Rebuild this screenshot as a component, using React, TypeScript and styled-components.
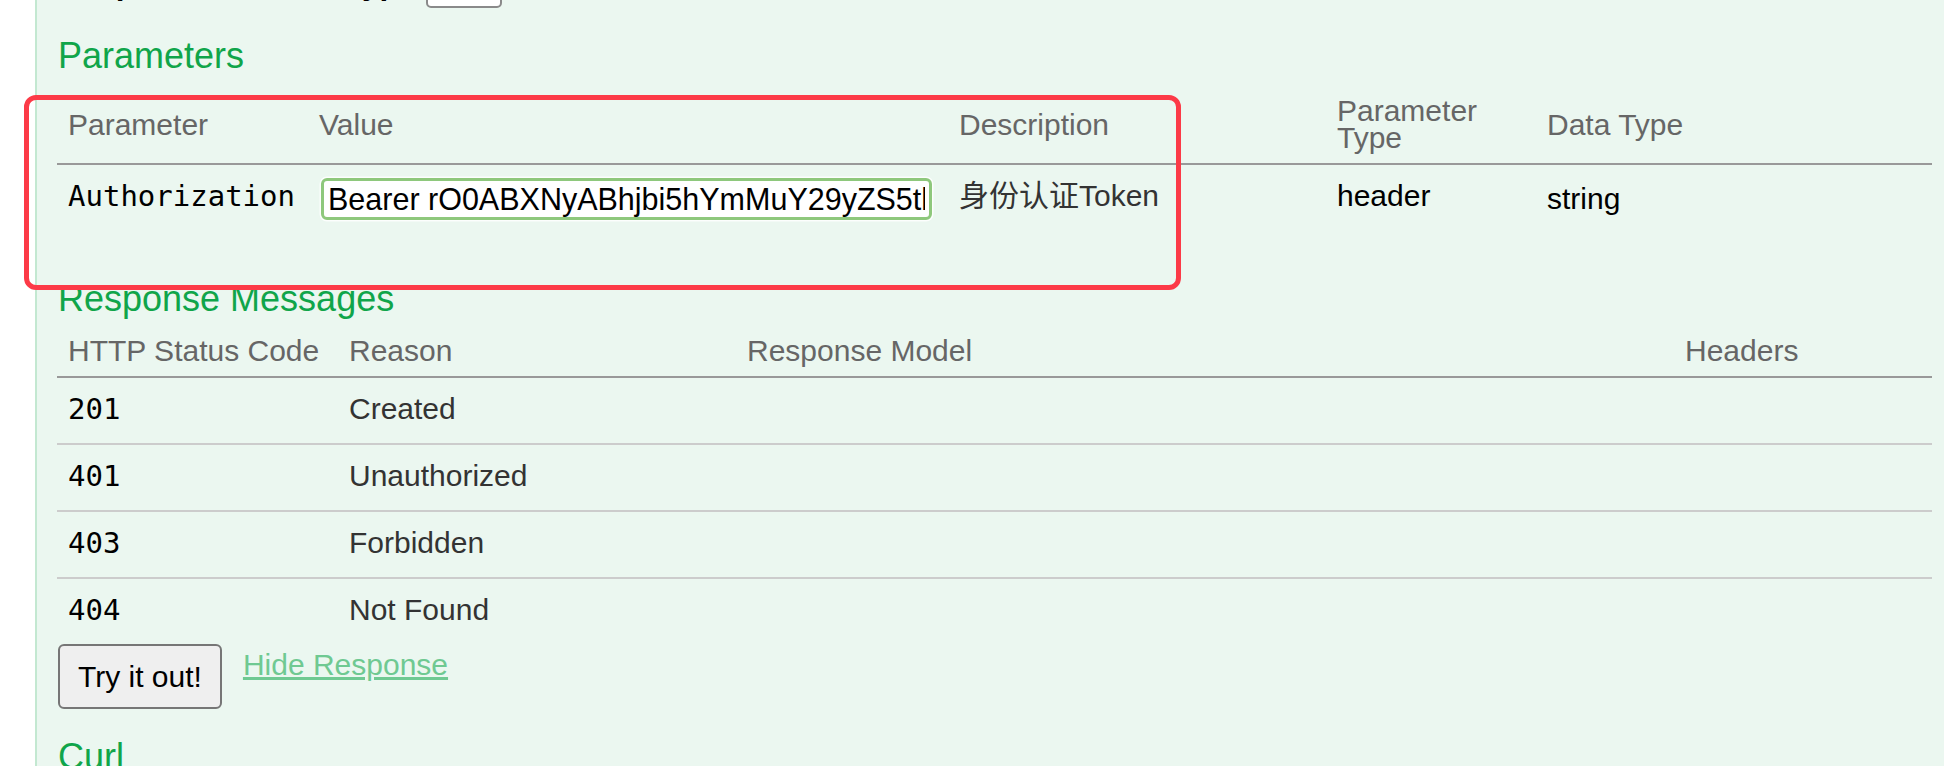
import React from "react";
import styled, { createGlobalStyle } from "styled-components";

const GlobalStyle = createGlobalStyle`
  html, body {
    margin: 0;
    padding: 0;
    background: #ffffff;
  }
  body {
    font-family: "Liberation Sans", Arial, "Noto Sans CJK SC", sans-serif;
  }
  * {
    box-sizing: border-box;
  }
`;

const Page = styled.div`
  position: relative;
  width: 1944px;
  height: 766px;
  overflow: hidden;
  background: #ffffff;
`;

const Panel = styled.div`
  display: flow-root;
  margin-left: 35px;
  min-height: 100%;
  background: #ebf7f0;
  border-left: 2px solid #c3e8d1;
  padding: 0 12px 0 20px;
`;

const ContentTypeRow = styled.div`
  display: flex;
  align-items: flex-end;
  gap: 10px;
  height: 41px;
  margin-top: -33px;
  padding-left: 1px;
`;

const ContentTypeLabel = styled.label`
  margin-bottom: 5px;
  font-weight: bold;
  font-size: 31.5px;
  line-height: 40px;
  color: #000;
`;

const ContentTypeSelect = styled.select`
  width: 76px;
  height: 36px;
  border: 2px solid #8a8a8a;
  border-radius: 5px;
  background: #ffffff;
  font-family: "Liberation Sans", Arial, sans-serif;
  font-size: 20px;
  appearance: none;
`;

const SectionTitle = styled.h4<{ $top: number }>`
  margin: ${(p) => p.$top}px 0 0 1px;
  font-size: 36px;
  line-height: 40px;
  font-weight: normal;
  color: #10a54a;
`;

const Table = styled.table<{ $mt: number; $mb: number }>`
  width: 100%;
  table-layout: fixed;
  border-collapse: separate;
  border-spacing: 0;
  margin: ${(p) => p.$mt}px 0 ${(p) => p.$mb}px;
  font-family: "Liberation Sans", Arial, "Noto Sans CJK SC", sans-serif;

  tbody tr:last-child td {
    border-bottom: none;
  }
`;

const Col = styled.col<{ $w: number }>`
  width: ${(p) => p.$w}px;
`;

const Th = styled.th`
  text-align: left;
  font-weight: normal;
  color: #666666;
  font-size: 30px;
  line-height: 27px;
  padding: 12px 11px;
  vertical-align: middle;
  border-bottom: 2px solid #999999;
`;

const Td = styled.td`
  vertical-align: top;
  padding: 13px 11px 16px;
  font-size: 30px;
  line-height: 36px;
  color: #333333;
  border-bottom: 2px solid #cccccc;
`;

const ParamTd = styled(Td)`
  padding-top: 13px;
  padding-bottom: 13px;
  color: #000000;
`;

const CodeTd = styled(Td)`
  font-family: "DejaVu Sans Mono", Menlo, monospace;
  font-size: 29px;
  color: #000000;
`;

const ParamCodeTd = styled(ParamTd)`
  font-family: "DejaVu Sans Mono", Menlo, monospace;
  font-size: 29px;
`;

const DescText = styled.span`
  color: #333333;
`;

const TypeSig = styled.span`
  display: inline-block;
  padding-top: 3px;
`;

const ValueInput = styled.input`
  display: block;
  width: 611px;
  height: 42px;
  margin: 0 0 0 2px;
  padding: 0 4px;
  border: 3px solid #8ec87c;
  border-radius: 6px;
  background: #ffffff;
  font-family: "Liberation Sans", Arial, sans-serif;
  font-size: 30.5px;
  color: #000000;
  outline: none;
  box-shadow: 0 0 0 1.5px rgba(255, 255, 255, 0.85);
`;

const ActionRow = styled.div`
  display: flex;
  align-items: flex-start;
  gap: 21px;
  padding-left: 1px;
`;

const TryButton = styled.button`
  height: 65px;
  padding: 0 18px;
  border: 2px solid #767676;
  border-radius: 6px;
  background: #efefef;
  font-family: "Liberation Sans", Arial, sans-serif;
  font-size: 30px;
  line-height: 34px;
  color: #000000;
`;

const ToggleLink = styled.a`
  margin-top: 3px;
  font-size: 30px;
  line-height: 36px;
  color: #6fc992;
  text-decoration: underline;
  cursor: pointer;
`;

const Annotation = styled.div`
  position: absolute;
  left: 24px;
  top: 95px;
  width: 1157px;
  height: 195px;
  border: 5px solid #fc3a47;
  border-radius: 12px;
  pointer-events: none;
`;

const responses = [
  { code: "201", reason: "Created" },
  { code: "401", reason: "Unauthorized" },
  { code: "403", reason: "Forbidden" },
  { code: "404", reason: "Not Found" },
];

export default function App() {
  return (
    <Page>
      <GlobalStyle />
      <Panel>
        <ContentTypeRow>
          <ContentTypeLabel>Response Content Type</ContentTypeLabel>
          <ContentTypeSelect defaultValue="">
            <option value=""></option>
          </ContentTypeSelect>
        </ContentTypeRow>

        <SectionTitle $top={28}>Parameters</SectionTitle>
        <Table $mt={9} $mb={46}>
          <colgroup>
            <Col $w={251} />
            <Col $w={640} />
            <Col $w={378} />
            <Col $w={210} />
            <Col $w={396} />
          </colgroup>
          <thead>
            <tr>
              <Th>Parameter</Th>
              <Th>Value</Th>
              <Th>Description</Th>
              <Th>Parameter Type</Th>
              <Th>Data Type</Th>
            </tr>
          </thead>
          <tbody>
            <tr>
              <ParamCodeTd>Authorization</ParamCodeTd>
              <ParamTd>
                <ValueInput
                  readOnly
                  value="Bearer rO0ABXNyABhjbi5hYmMuY29yZS5tbGxpYi5hdXRoLlRva2Vu"
                />
              </ParamTd>
              <ParamTd>
                <DescText>身份认证Token</DescText>
              </ParamTd>
              <ParamTd>header</ParamTd>
              <ParamTd>
                <TypeSig>string</TypeSig>
              </ParamTd>
            </tr>
          </tbody>
        </Table>

        <SectionTitle $top={0}>Response Messages</SectionTitle>
        <Table $mt={6} $mb={0}>
          <colgroup>
            <Col $w={281} />
            <Col $w={398} />
            <Col $w={938} />
            <Col $w={258} />
          </colgroup>
          <thead>
            <tr>
              <Th>HTTP Status Code</Th>
              <Th>Reason</Th>
              <Th>Response Model</Th>
              <Th>Headers</Th>
            </tr>
          </thead>
          <tbody>
            {responses.map((r) => (
              <tr key={r.code}>
                <CodeTd>{r.code}</CodeTd>
                <Td>{r.reason}</Td>
                <Td></Td>
                <Td></Td>
              </tr>
            ))}
          </tbody>
        </Table>

        <ActionRow>
          <TryButton type="button">Try it out!</TryButton>
          <ToggleLink>Hide Response</ToggleLink>
        </ActionRow>

        <SectionTitle $top={28}>Curl</SectionTitle>
      </Panel>
      <Annotation />
    </Page>
  );
}
